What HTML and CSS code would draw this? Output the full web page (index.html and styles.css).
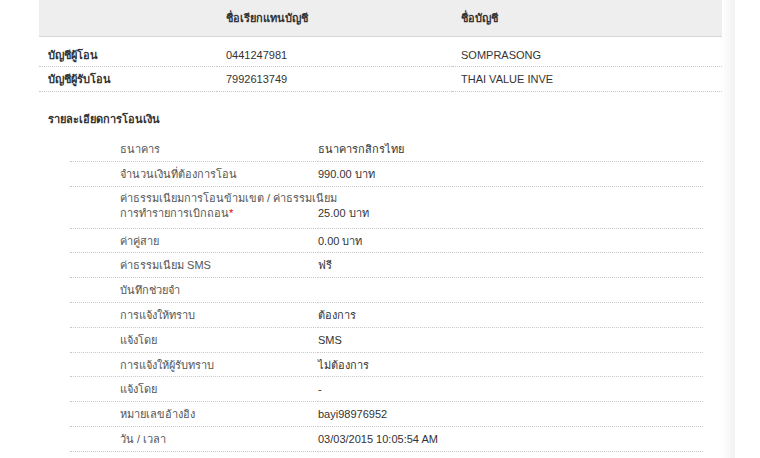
FILE: index.html
```html
<!DOCTYPE html>
<html lang="th">

<head>
    <meta charset="UTF-8">
    <meta name="viewport" content="width=device-width, initial-scale=1.0">
    <title>รายละเอียดการโอนเงิน</title>
    <link rel="stylesheet" href="styles.css">
</head>

<body>
    <div class="page">
        <div class="content">
            <table class="accounts">
                <thead>
                    <tr>
                        <th class="col-label"></th>
                        <th class="col-alias">ชื่อเรียกแทนบัญชี</th>
                        <th>ชื่อบัญชี</th>
                    </tr>
                </thead>
                <tbody>
                    <tr class="first">
                        <td class="acc-label">บัญชีผู้โอน</td>
                        <td>0441247981</td>
                        <td>SOMPRASONG</td>
                    </tr>
                    <tr>
                        <td class="acc-label">บัญชีผู้รับโอน</td>
                        <td>7992613749</td>
                        <td>THAI VALUE INVE</td>
                    </tr>
                </tbody>
            </table>

            <h3 class="section-title">รายละเอียดการโอนเงิน</h3>

            <table class="details">
                <colgroup>
                    <col class="label-col">
                    <col>
                </colgroup>
                <tr>
                    <td class="label">ธนาคาร</td>
                    <td class="value">ธนาคารกสิกรไทย</td>
                </tr>
                <tr>
                    <td class="label">จำนวนเงินที่ต้องการโอน</td>
                    <td class="value">990.00 บาท</td>
                </tr>
                <tr class="tall">
                    <td class="label">ค่าธรรมเนียมการโอนข้ามเขต / ค่าธรรมเนียม<br>การทำรายการเบิกถอน<span class="req">*</span></td>
                    <td class="value">25.00 บาท</td>
                </tr>
                <tr>
                    <td class="label">ค่าคู่สาย</td>
                    <td class="value">0.00 บาท</td>
                </tr>
                <tr>
                    <td class="label">ค่าธรรมเนียม SMS</td>
                    <td class="value">ฟรี</td>
                </tr>
                <tr>
                    <td class="label">บันทึกช่วยจำ</td>
                    <td class="value"></td>
                </tr>
                <tr>
                    <td class="label">การแจ้งให้ทราบ</td>
                    <td class="value">ต้องการ</td>
                </tr>
                <tr>
                    <td class="label">แจ้งโดย</td>
                    <td class="value">SMS</td>
                </tr>
                <tr>
                    <td class="label">การแจ้งให้ผู้รับทราบ</td>
                    <td class="value">ไม่ต้องการ</td>
                </tr>
                <tr>
                    <td class="label">แจ้งโดย</td>
                    <td class="value">-</td>
                </tr>
                <tr>
                    <td class="label">หมายเลขอ้างอิง</td>
                    <td class="value">bayi98976952</td>
                </tr>
                <tr>
                    <td class="label">วัน / เวลา</td>
                    <td class="value">03/03/2015 10:05:54 AM</td>
                </tr>
            </table>

            <div class="more-link"><a href="#">ทำรายการโอนเงินอีกครั้ง</a></div>
        </div>
        <div class="edge"></div>
    </div>
</body>

</html>
```

FILE: styles.css
```css
body {
    margin: 0;
    padding: 0;
    background: #fff;
    font-family: Tahoma, "Liberation Sans", Arial, sans-serif;
    font-size: 11px;
    color: #333;
}

.page {
    display: flex;
    align-items: stretch;
    padding-left: 39px;
    min-height: 458px;
}

.content {
    width: 683px;
}

.edge {
    width: 13px;
    background: linear-gradient(to right, #fff, #f1f1f1);
}

/* account table */
.accounts {
    width: 100%;
    border-collapse: collapse;
}

.accounts th {
    background-color: #eeeeee;
    border-bottom: 1px solid #d6d6d6;
    height: 36px;
    padding: 0 0 0 9px;
    text-align: left;
    font-weight: bold;
    color: #333;
}

.accounts .col-label {
    width: 169px;
}

.accounts .col-alias {
    width: 226px;
}

.accounts td {
    padding: 5px 0 4px 9px;
    line-height: 15px;
    border-bottom: 1px dotted #c8c8c8;
    color: #333;
}

.accounts .first td {
    padding-top: 11px;
    padding-bottom: 3px;
}

.accounts .acc-label {
    font-weight: bold;
}

/* details */
.section-title {
    margin: 20px 0 10px 9px;
    font-size: 11px;
    line-height: 15px;
    font-weight: bold;
    color: #333;
}

.details {
    margin-left: 31px;
    width: 633px;
    border-collapse: collapse;
    table-layout: fixed;
}

.details .label-col {
    width: 248px;
}

.details td {
    padding: 5px 0 4px 0;
    line-height: 14.8px;
    border-bottom: 1px dotted #c8c8c8;
    vertical-align: bottom;
}

.details .label {
    padding-left: 50px;
    color: #555;
    white-space: nowrap;
}

.details .value {
    color: #333;
}

.details .tall td {
    padding-top: 4px;
    padding-bottom: 7px;
    line-height: 15px;
}

.req {
    color: #d00;
}

.more-link {
    padding: 8px 0 0 270px;
}

.more-link a {
    color: #1a3fc8;
    text-decoration: none;
}
```
